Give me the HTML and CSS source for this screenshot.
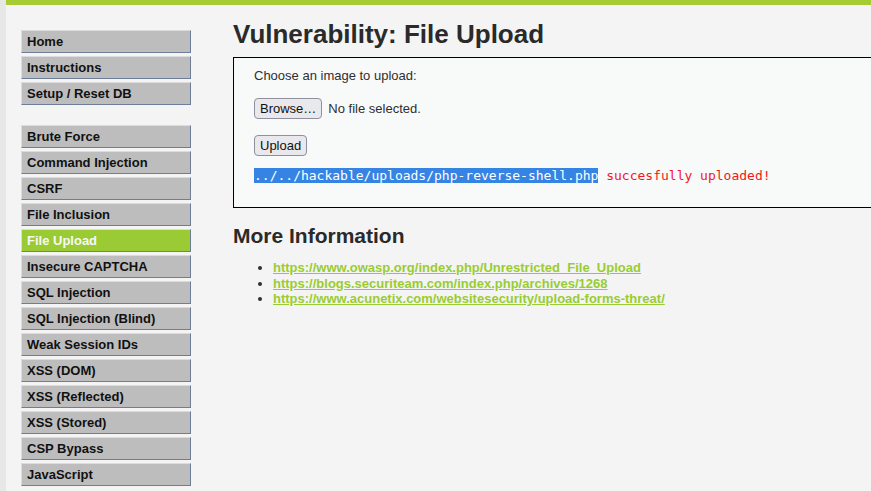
FILE: index.html
```html
<!DOCTYPE html>
<html>
<head>
<meta charset="utf-8">
<title>Vulnerability: File Upload</title>
<link rel="stylesheet" href="styles.css">
</head>
<body>
<div class="container">
  <div class="topbar"></div>
  <div class="main">
    <nav class="menu">
      <ul class="group">
        <li><a href="#">Home</a></li>
        <li><a href="#">Instructions</a></li>
        <li><a href="#">Setup / Reset DB</a></li>
      </ul>
      <ul class="group">
        <li><a href="#">Brute Force</a></li>
        <li><a href="#">Command Injection</a></li>
        <li><a href="#">CSRF</a></li>
        <li><a href="#">File Inclusion</a></li>
        <li class="selected"><a href="#">File Upload</a></li>
        <li><a href="#">Insecure CAPTCHA</a></li>
        <li><a href="#">SQL Injection</a></li>
        <li><a href="#">SQL Injection (Blind)</a></li>
        <li><a href="#">Weak Session IDs</a></li>
        <li><a href="#">XSS (DOM)</a></li>
        <li><a href="#">XSS (Reflected)</a></li>
        <li><a href="#">XSS (Stored)</a></li>
        <li><a href="#">CSP Bypass</a></li>
        <li><a href="#">JavaScript</a></li>
      </ul>
    </nav>
    <div class="content">
      <h1 class="title">Vulnerability: File Upload</h1>
      <div class="code-area">
        <form class="upload-form">
          <div class="line">Choose an image to upload:</div>
          <div class="file-row">
            <span class="btn">Browse…</span>
            <span class="file-label">No file selected.</span>
          </div>
          <div class="submit-row"><span class="btn">Upload</span></div>
        </form>
        <pre class="result"><span class="sel">../../hackable/uploads/php-reverse-shell.php</span> succesfully uploaded!</pre>
      </div>
      <h2 class="subtitle">More Information</h2>
      <ul class="links">
        <li><a href="#">https://www.owasp.org/index.php/Unrestricted_File_Upload</a></li>
        <li><a href="#">https://blogs.securiteam.com/index.php/archives/1268</a></li>
        <li><a href="#">https://www.acunetix.com/websitesecurity/upload-forms-threat/</a></li>
      </ul>
    </div>
  </div>
</div>
</body>
</html>
```
FILE: styles.css
```css
html, body {
  margin: 0;
  padding: 0;
  overflow: hidden;
  height: 100%;
}
body {
  background: #e7e7e7;
  font-family: "Liberation Sans", Arial, sans-serif;
  font-size: 13px;
  color: #2f2f2f;
}
.container {
  margin-left: 6px;
  background: #f4f4f4;
  min-height: 100%;
}
.topbar {
  height: 5px;
  background: #a6cc33;
}
.main {
  display: flex;
  padding-left: 15px;
}
.menu {
  flex: none;
  width: 170px;
  padding-top: 25px;
  margin-right: 42px;
}
.group {
  list-style: none;
  margin: 0 0 20px 0;
  padding: 0;
}
.group li {
  margin-bottom: 3px;
}
.group a {
  display: block;
  height: 21px;
  line-height: 21px;
  padding: 0 5px;
  background: #bdbdbd;
  border-top: 1px solid #dcdcdc;
  border-left: 1px solid #dcdcdc;
  border-right: 1px solid #6e7d98;
  border-bottom: 1px solid #6e7d98;
  color: #111;
  font-weight: bold;
  text-decoration: none;
}
.group li.selected a {
  background: #9bcb34;
  color: #f8f8f8;
}
.content {
  flex: none;
  width: 720px;
}
.title {
  margin: 14px 0 8px 0;
  font-size: 26px;
  line-height: 30px;
  font-weight: bold;
  color: #2a2a2a;
}
.code-area {
  border: 1px solid #000;
  background: #f8f9f9;
  padding: 10px 20px 23px 20px;
}
.upload-form {
  margin: 0;
}
.line {
  line-height: 16px;
}
.file-row {
  display: flex;
  align-items: center;
  gap: 6px;
  margin-top: 14px;
}
.submit-row {
  display: flex;
  margin-top: 16px;
}
.btn {
  display: inline-block;
  height: 19px;
  line-height: 19px;
  padding: 0 5px;
  border: 1px solid #8f8f9d;
  border-radius: 4px;
  background: #e9e9ed;
  color: #111;
  font-size: 13px;
}
.file-label {
  color: #2f2f2f;
}
.result {
  margin: 12px 0 0 0;
  font-family: "DejaVu Sans Mono", monospace;
  font-size: 13px;
  line-height: 16px;
  color: #f01818;
}
.sel {
  background: #3584e4;
  color: #ffffff;
}
.subtitle {
  margin: 16px 0 12px 0;
  font-size: 21px;
  line-height: 24px;
  font-weight: bold;
  color: #2a2a2a;
}
.links {
  margin: 0;
  padding-left: 40px;
  line-height: 15.6px;
}
.links a {
  color: #99cc33;
  font-weight: bold;
  text-decoration: underline;
}
```
